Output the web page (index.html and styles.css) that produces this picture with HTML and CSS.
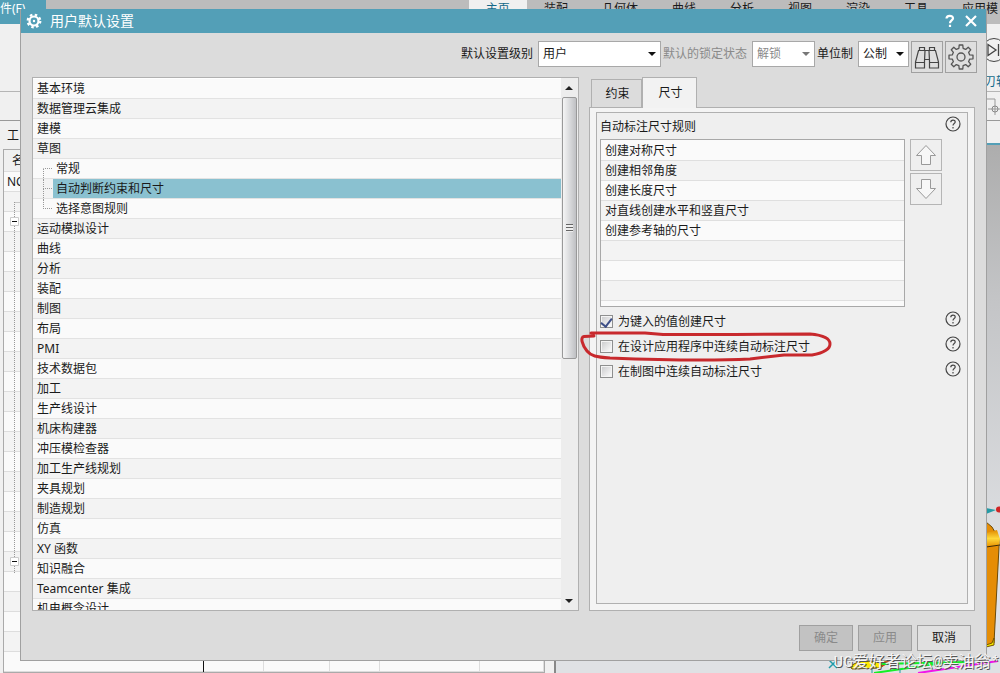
FILE: index.html
```html
<!DOCTYPE html>
<html lang="zh-CN">
<head>
<meta charset="utf-8">
<title>用户默认设置</title>
<link rel="stylesheet" href="styles.css">
</head>
<body>
<svg class="symbols" aria-hidden="true">
  <symbol id="help" viewBox="0 0 16 16">
    <circle cx="8" cy="8" r="7" fill="none" stroke="#444" stroke-width="1.2"/>
    <path d="M5.800 6.200C5.800 3.400 10.200 3.400 10.200 6C10.200 7.600 8 7.600 8 9.600M8 11V12.400" fill="none" stroke="#444" stroke-width="1.2"/>
  </symbol>
</svg>
<div class="app">
  <nav class="menubar">
    <a class="file" href="#">件(F)</a>
    <a class="menu active" href="#">主页</a>
    <a class="menu" href="#">装配</a>
    <a class="menu" href="#">几何体</a>
    <a class="menu" href="#">曲线</a>
    <a class="menu" href="#">分析</a>
    <a class="menu" href="#">视图</a>
    <a class="menu" href="#">渲染</a>
    <a class="menu" href="#">工具</a>
    <a class="menu" href="#">应用模</a>
  </nav>
  <div class="ribbon">
    <div class="ribbon-tools">
      <svg width="20" height="24" viewBox="0 0 20 24"><circle cx="14" cy="12" r="11.500" fill="none" stroke="#444"/><path d="M8 6.500L16 12L8 17.500ZM18.500 6V18" fill="none" stroke="#444" stroke-width="1.300"/></svg>
      <a href="#">刃轴</a>
    </div>
    <div class="ribbon-row">
      <svg width="14" height="24" viewBox="0 0 14 24"><path d="M0 4H9V20M2 14H14" fill="none" stroke="#999"/><circle cx="9" cy="14" r="3" fill="none" stroke="#888"/></svg>
    </div>
  </div>
  <div class="workspace">
    <section class="navigator">
      <h2>工</h2>
      <div class="nav-table">
        <div class="nav-head">名</div>
        <div class="nav-rows">
          <div class="nav-name">NC
            <svg width="20" height="372" viewBox="0 0 20 372"><path d="M7.500 0V372M7.500 0.500H20" stroke="#999" stroke-dasharray="1 1" fill="none"/><path d="M3.500 15.500h8v8h-8zM3.500 355.500h8v8h-8z" fill="#fff" stroke="#ccc"/><path d="M5 19.500h5M5 359.500h5" stroke="#111" fill="none"/></svg>
          </div>
          <i class="c60"></i><i class="c66"></i><i class="c50"></i><i class="c100"></i><i class="c64"></i>
        </div>
      </div>
    </section>
    <section class="viewport">
      <svg class="model" width="180" height="180" viewBox="0 0 180 180">
        <defs><linearGradient id="gold" x2="0" y2="1"><stop offset="0" stop-color="#e08a00"/><stop offset=".5" stop-color="#ffd83a"/><stop offset="1" stop-color="#e89000"/></linearGradient></defs>
        <path d="M166 15L176 17L166 21Z" fill="#249ba5"/><circle cx="179" cy="16.500" r="3" fill="#d02525"/>
        <path d="M166 29L172 34L179 46V54L174 150L166 153Z" fill="#e58d05" stroke="#6c4b08"/>
        <path d="M166 40L177 37L180 46L179 53L166 54Z" fill="url(#gold)"/>
        <path d="M166 54L180 52" stroke="#3d2b08"/>
        <path d="M166 152L172 150L174 145V152L166 154Z" fill="#f2e500" stroke="#775500"/>
        <path d="M9 167L17 175M17 167L9 175" stroke="#219aa7" stroke-width="1.500"/>
        <path d="M30 173L40 168L68 169L60 175L32 176Z" fill="#ffe800" stroke="#775500"/>
        <path d="M58 169L72 168L62 174Z" fill="#c54b12"/>
        <path d="M54 180L130 169M60 171L145 169" stroke="#16ef25" stroke-width="2"/>
        <path d="M98 180L178 168" stroke="#f016e8" stroke-width="2"/>
        <path d="M52 171V180M80 176V180" stroke="#249ba5"/>
      </svg>
    </section>
  </div>
</div>

<main class="dialog" role="dialog" aria-labelledby="dlg-title">
  <header class="titlebar">
    <svg width="16" height="16" viewBox="0 0 16 16"><circle cx="8" cy="8" r="6.300" fill="none" stroke="#fff" stroke-width="2.200" stroke-dasharray="2.500 2.450"/><circle cx="8" cy="8" r="4.500" fill="none" stroke="#fff" stroke-width="2.200"/><circle cx="8" cy="8" r="1.200" fill="#fff"/></svg>
    <h1 id="dlg-title">用户默认设置</h1>
    <button class="caption" aria-label="帮助"><svg width="12" height="14" viewBox="0 0 12 14"><path d="M2.500 4.500C2.500 1 9 1 9 4.300C9 6.500 6 6.500 6 9.200M6 10.800V13" fill="none" stroke="#fff" stroke-width="2.200"/></svg></button>
    <button class="caption" aria-label="关闭"><svg width="14" height="14" viewBox="0 0 14 14"><path d="M2 2L12 12M12 2L2 12" stroke="#fff" stroke-width="2.200"/></svg></button>
  </header>

  <div class="toolbar">
    <label class="field" for="level">默认设置级别</label>
    <div class="combo wide"><select id="level"><option>用户</option></select></div>
    <label class="field off" for="lock">默认的锁定状态</label>
    <div class="combo mid off"><select id="lock" disabled><option>解锁</option></select></div>
    <label class="field" for="unit">单位制</label>
    <div class="combo small"><select id="unit"><option>公制</option></select></div>
    <button class="tool" aria-label="查找"><svg width="26" height="26" viewBox="0 0 26 26"><path d="M5.500 6.500V3.500H10.500V6.500M15.500 6.500V3.500H20.500V6.500M4.500 6.500H11L10.500 17V24H1.500V18ZM15 6.500H21.500L24.500 18V24H15.500V17ZM1.500 18.500H10.500M15.500 18.500H24.500M11 6.500H15M10.500 15.500H15.500" fill="none" stroke="#444" stroke-width="1.200"/></svg></button>
    <button class="tool" aria-label="管理设置"><svg width="26" height="26" viewBox="0 0 26 26"><path d="M10.900 4.300L11.200 1H14.800L15.100 4.300L17.700 5.400L20.200 3.300L22.700 5.800L20.600 8.300L21.700 10.900L25 11.200V14.800L21.700 15.100L20.600 17.700L22.700 20.200L20.200 22.700L17.700 20.600L15.100 21.700L14.800 25H11.200L10.900 21.700L8.300 20.600L5.800 22.700L3.300 20.200L5.400 17.700L4.300 15.100L1 14.800V11.200L4.300 10.900L5.400 8.300L3.300 5.800L5.800 3.300L8.300 5.400Z" fill="none" stroke="#555" stroke-width="1.300" stroke-linejoin="round"/><circle cx="13" cy="13" r="4" fill="none" stroke="#555" stroke-width="1.300"/></svg></button>
  </div>

  <div class="body">
    <section class="tree-box">
      <ul class="tree">
        <li>基本环境</li><li>数据管理云集成</li><li>建模</li><li>草图</li>
        <li class="child first"><span class="branch"></span><span class="name">常规</span></li>
        <li class="child selected"><span class="branch"></span><span class="name">自动判断约束和尺寸</span></li>
        <li class="child last"><span class="branch"></span><span class="name">选择意图规则</span></li>
        <li>运动模拟设计</li><li>曲线</li><li>分析</li><li>装配</li><li>制图</li><li>布局</li><li>PMI</li><li>技术数据包</li><li>加工</li><li>生产线设计</li><li>机床构建器</li><li>冲压模检查器</li><li>加工生产线规划</li><li>夹具规划</li><li>制造规划</li><li>仿真</li><li>XY 函数</li><li>知识融合</li><li>Teamcenter 集成</li><li>机电概念设计</li>
      </ul>
      <div class="scrollbar">
        <span class="arrow up"></span>
        <div class="track"><div class="thumb"><span class="grip"></span></div></div>
        <span class="arrow down"></span>
      </div>
    </section>

    <section class="pages">
      <div class="tabs" role="tablist">
        <button class="tab" role="tab">约束</button>
        <button class="tab current" role="tab" aria-selected="true">尺寸</button>
      </div>
      <div class="panel">
        <div class="group">
          <div class="line"><h2>自动标注尺寸规则</h2><button class="help" aria-label="帮助"><svg width="16" height="16"><use href="#help"/></svg></button></div>
          <div class="rules">
            <ul class="rule-list"><li>创建对称尺寸</li><li>创建相邻角度</li><li>创建长度尺寸</li><li>对直线创建水平和竖直尺寸</li><li>创建参考轴的尺寸</li><li></li><li></li><li></li></ul>
            <div class="movers">
              <button class="move" aria-label="上移"><svg width="22" height="22" viewBox="0 0 22 22"><path d="M11 1.500L20.500 11.500H15.500V20.500H6.500V11.500H1.500Z" fill="#f7f7f7" stroke="#999"/></svg></button>
              <button class="move" aria-label="下移"><svg width="22" height="22" viewBox="0 0 22 22"><path d="M11 20.500L20.500 10.500H15.500V1.500H6.500V10.500H1.500Z" fill="#f7f7f7" stroke="#999"/></svg></button>
            </div>
          </div>
          <div class="options">
            <div class="option"><input type="checkbox" id="o1" checked><label for="o1">为键入的值创建尺寸</label><button class="help" aria-label="帮助"><svg width="16" height="16"><use href="#help"/></svg></button></div>
            <div class="option"><input type="checkbox" id="o2"><label for="o2">在设计应用程序中连续自动标注尺寸</label><button class="help" aria-label="帮助"><svg width="16" height="16"><use href="#help"/></svg></button>
              <svg class="ring" width="254" height="36" viewBox="0 0 254 36"><path d="M11 4H65L83 5.500H155L230 5C242 6 250 9 250 15C250 21 243 24 232 26L204 26L170 30C130 32 80 31 30 29C16 28 11 27 7 22C2 16 0 8 4 7.500L14 7" fill="none" stroke="#c8292d" stroke-width="3" stroke-linecap="round" stroke-linejoin="round"/></svg>
            </div>
            <div class="option"><input type="checkbox" id="o3"><label for="o3">在制图中连续自动标注尺寸</label><button class="help" aria-label="帮助"><svg width="16" height="16"><use href="#help"/></svg></button></div>
          </div>
        </div>
      </div>
    </section>
  </div>

  <footer class="actions">
    <button disabled>确定</button>
    <button disabled>应用</button>
    <button>取消</button>
  </footer>
</main>
<div class="watermark">UG爱好者论坛@卖油翁*</div>
</body>
</html>
```

FILE: styles.css
```css
* { box-sizing: border-box; }
body {
  margin: 0;
  height: 100vh;
  overflow: hidden;
  position: relative;
  font: 12px/20px "Noto Sans", "Noto Sans CJK SC", sans-serif;
  color: #1a1a1a;
}
button, select, input { font: inherit; color: inherit; margin: 0; padding: 0; }
button { display: flex; align-items: center; justify-content: center; }
ul { list-style: none; margin: 0; padding: 0; }
h1, h2 { margin: 0; font-size: 12px; font-weight: 400; }
a { color: inherit; text-decoration: none; }
svg { display: block; flex: none; }
.symbols { display: none; }

/* application window */
.app { height: 100%; display: flex; flex-direction: column; background: #f0f0f0; }
.menubar { display: flex; justify-content: flex-end; height: 24px; padding-right: 2px; background: #bcbcbc; line-height: 18px; white-space: nowrap; }
.file { width: 46px; margin-right: auto; background: #539fb7; color: #fff; }
.menu { padding: 0 17px; }
.menu:last-child { padding-right: 0; }
.menu.active { background: #f0f0f0; color: #15698a; }
.ribbon { flex: none; height: 121px; border-bottom: 2px solid #539fb7; background: #f0f0f0; }
.ribbon-tools { height: 68px; padding-top: 14px; display: flex; flex-direction: column; align-items: flex-end; overflow: hidden; border-bottom: 1px solid #b5b5b5; color: #15698a; }
.ribbon-tools a { margin-top: 10px; white-space: nowrap; width: 16px; }
.ribbon-row { height: 29px; display: flex; justify-content: flex-end; padding-top: 3px; border-bottom: 1px solid #999; }
.workspace { flex: 1; min-height: 0; display: flex; }
.navigator { flex: 0 0 556px; margin-top: -20px; padding-left: 3px; background: #f0f0f0; border-right: 2px solid #888; display: flex; flex-direction: column; }
.navigator h2 { padding-left: 4px; height: 24px; line-height: 22px; }
.nav-table { flex: 1; width: 542px; display: flex; flex-direction: column; border: 1px solid #aaa; background: #fafafa; }
.nav-head { height: 22px; padding-left: 8px; line-height: 22px; border-bottom: 1px solid #ddd; background: #f0f0f0; }
.nav-rows { flex: 1; min-height: 0; display: flex; background: repeating-linear-gradient(#fafafa 0 19px, #ddd 19px 20px, #f3f3f3 20px 39px, #ddd 39px 40px); }
.nav-name { flex: 1; padding-left: 3px; border-right: 1px solid #111; overflow: hidden; }
.nav-name svg { margin-top: 10px; }
.nav-rows i { border-right: 1px solid #ddd; }
.c50 { width: 50px; }
.c60 { width: 60px; }
.c66 { width: 66px; }
.c64 { width: 64px; }
.c100 { width: 100px; }
.viewport { flex: 1; position: relative; background: linear-gradient(#adadad, #c4c5c7 30%, #dfe1e4 80%); }
.model { position: absolute; right: 0; bottom: 0; }

/* dialog */
.dialog { position: absolute; top: 9px; right: 13px; bottom: 12px; left: 20px; display: flex; flex-direction: column; background: #dcdcdc; border: 1px solid #a0a0a0; border-top: 0; }
.titlebar { flex: none; height: 24px; padding: 0 8px 0 5px; display: flex; align-items: center; gap: 8px; background: #539fb7; color: #fff; }
.titlebar h1 { flex: 1; font-size: 14px; }
.caption { border: 0; background: none; }
.toolbar { flex: none; display: flex; justify-content: flex-end; gap: 2px; padding: 8px 9px 4px; }
.field { line-height: 26px; padding-right: 3px; }
.field.off { color: #8a8a8a; }
.combo { position: relative; height: 26px; }
.combo select { width: 100%; height: 100%; padding: 0 4px; appearance: none; border: 1px solid #a8a8a8; border-radius: 0; background: #fff; opacity: 1; }
.combo::after { content: ""; position: absolute; right: 5px; top: 11px; border: 4px solid transparent; border-top-color: #111; border-bottom: 0; }
.combo.off { color: #8a8a8a; }
.combo.off::after { border-top-color: #777; }
.wide { width: 123px; }
.mid { width: 63px; }
.small { width: 51px; }
.tool { width: 32px; height: 32px; border: 1px solid #a0a0a0; background: #dedede; }

.body { flex: 1; min-height: 0; display: grid; grid-template-columns: 17fr 12fr; gap: 10px; padding: 0 11px; }
.tree-box { min-height: 0; display: flex; border: 1px solid #b0b0b0; background: #fff; }
.tree { flex: 1; padding-top: 1px; overflow: hidden; }
.tree li { height: 20px; padding-left: 4px; border-bottom: 1px solid #e2e2e2; background: #fafafa; }
.tree li:nth-child(even) { background: #f3f3f3; }
.tree .child { display: flex; padding-left: 10px; }
.branch { width: 10px; display: flex; flex-direction: column; }
.branch::before, .branch::after { content: ""; flex: 1; border-left: 1px dotted #999; }
.branch::before { border-bottom: 1px dotted #999; margin-right: 1px; }
.first .branch::before, .last .branch::after { border-left-color: transparent; }
.name { flex: 1; padding-left: 3px; }
.selected .name { background: #8ac1d0; }
.scrollbar { width: 17px; display: flex; flex-direction: column; align-items: center; padding: 0 1px; background: #ededed; }
.arrow { height: 19px; display: flex; align-items: center; }
.arrow::before { content: ""; border: 4px solid transparent; }
.up::before { border-bottom-color: #222; border-top: 0; }
.down::before { border-top-color: #222; border-bottom: 0; }
.track { flex: 1; width: 100%; }
.thumb { height: 53%; display: flex; align-items: center; justify-content: center; border: 1px solid #999; border-radius: 2px; background: linear-gradient(90deg, #f5f5f5, #dadbdd 50%, #bfc0c3); }
.grip { width: 7px; height: 8px; background: repeating-linear-gradient(#666 0 1px, #eee 1px 3px); }

.pages { min-height: 0; display: flex; flex-direction: column; }
.tabs { height: 31px; display: flex; align-items: flex-end; padding-left: 2px; margin-bottom: -1px; position: relative; }
.tab { width: 51px; height: 29px; padding-left: 2px; border: 1px solid #b0b0b0; background: #dcdcdc; }
.tab.current { width: 55px; height: 31px; border-bottom: 0; border-color: #b0b0b0; background: #f2f2f2; }
.panel { flex: 1; padding: 4px 6px 6px; display: flex; border: 1px solid #b0b0b0; background: #f4f4f4; }
.group { flex: 1; padding: 3px 5px 0 3px; border: 1px solid #b0b0b0; background: #efefef; }
.line { display: flex; justify-content: space-between; height: 23px; }
.line h2 { line-height: 22px; }
.help { width: 18px; height: 18px; border: 0; background: none; }
.line .help { height: 16px; }
.rules { display: flex; gap: 5px; padding-right: 20px; }
.rule-list { flex: 1; height: 168px; padding-top: 1px; border: 1px solid #a8a8a8; background: #fafafa; }
.rule-list li { height: 20px; padding-left: 4px; border-bottom: 1px solid #dfdfdf; }
.rule-list li:nth-child(even) { background: #f3f3f3; }
.movers { display: flex; flex-direction: column; gap: 2px; }
.move { width: 32px; height: 32px; border: 1px solid #b5b5b5; background: #efefef; }
.options { padding-top: 2px; }
.option { position: relative; height: 25px; display: flex; align-items: center; }
.option label { flex: 1; padding-left: 5px; }
.option .help { margin-bottom: 5px; }
.option input { appearance: none; width: 13px; height: 13px; border: 1px solid #8e8f8f; box-shadow: inset 0 0 0 1px #f4f4f4; background: linear-gradient(135deg, #c8c9cb, #fff); }
.option input:checked { display: flex; align-items: flex-start; justify-content: center; }
.option input:checked::after { content: ""; width: 5px; height: 9px; border: solid #3d4f87; border-width: 0 2px 2px 0; transform: rotate(38deg); }
.ring { position: absolute; left: -20px; top: -5px; pointer-events: none; }

.actions { flex: none; display: flex; justify-content: flex-end; gap: 5px; padding: 14px 15px 9px; }
.actions button { width: 54px; height: 26px; border: 1px solid #a0a0a0; background: #e0e0e0; }
.actions button:disabled { background: #c2c2c2; color: #8a8a8a; }

.watermark { position: absolute; right: 0; bottom: 0; font: 16px/20px "Liberation Mono", "Noto Sans CJK SC", monospace; color: #f4f4f4; text-shadow: 1px 1px 0 #555; white-space: nowrap; }
```
